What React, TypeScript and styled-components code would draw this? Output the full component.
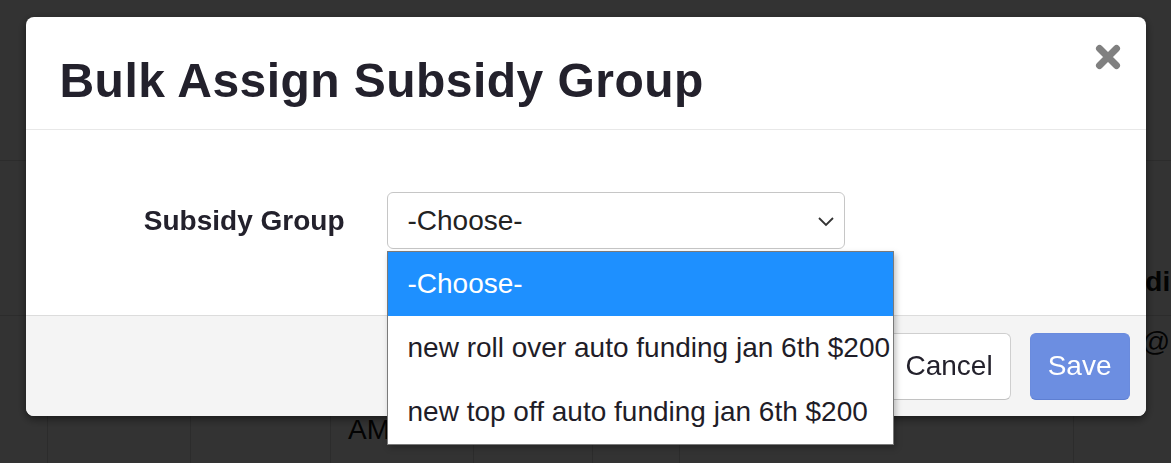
import styled, { createGlobalStyle } from "styled-components";

const GlobalStyle = createGlobalStyle`
  html, body {
    margin: 0;
    padding: 0;
  }
  body {
    font-family: "Liberation Sans", Arial, sans-serif;
    background: #ffffff;
    overflow: hidden;
  }
  * {
    box-sizing: border-box;
  }
`;

const COLS = "47px 143px 140px 143px 119px 87px 394px 1fr";

const Backdrop = styled.div`
  height: 463px;
  background: #ffffff;
  color: #111;
`;

const TopBar = styled.div`
  height: 161px;
  border-bottom: 1px solid #dcdcdc;
`;

const HeadRow = styled.div`
  display: grid;
  grid-template-columns: ${COLS};
  height: 155px;
  border-bottom: 1px solid #dcdcdc;
`;

const HeadCell = styled.div`
  display: flex;
  align-items: flex-end;
  padding: 0 0 17px 21px;
  font-size: 28px;
  line-height: 32px;
  font-weight: 700;
  white-space: nowrap;
  overflow: hidden;
`;

const BodyRow = styled.div`
  display: grid;
  grid-template-columns: ${COLS};
  height: 160px;
`;

const BodyCell = styled.div<{ $pad?: number; $top?: number }>`
  border-left: 1px solid #dcdcdc;
  padding: ${(p) => p.$top ?? 4}px 0 0 ${(p) => p.$pad ?? 17}px;
  font-size: 28px;
  line-height: 44px;
  white-space: nowrap;
  overflow: hidden;
  &:first-child {
    border-left: none;
  }
`;

const Overlay = styled.div`
  position: fixed;
  inset: 0;
  background: rgba(0, 0, 0, 0.8);
  display: flex;
  justify-content: center;
  align-items: flex-start;
  padding-top: 17px;
`;

const Modal = styled.div`
  width: 1120px;
  background: #ffffff;
  border-radius: 8px;
  box-shadow: 0 3px 10px rgba(0, 0, 0, 0.5);
  color: #23212c;
`;

const ModalHeader = styled.header`
  display: flex;
  justify-content: space-between;
  align-items: flex-start;
  padding: 37px 25px 22px 34px;
  border-bottom: 1px solid #e8e8e8;
`;

const Title = styled.h1`
  margin: 0;
  font-size: 48px;
  line-height: 53px;
  font-weight: 700;
  letter-spacing: 0.45px;
  color: #23212c;
`;

const CloseBtn = styled.button`
  border: none;
  background: none;
  padding: 0;
  margin-top: -10px;
  width: 26px;
  height: 26px;
  cursor: pointer;
  display: flex;
`;

const ModalBody = styled.div`
  padding: 62px 0 66px;
`;

const FormRow = styled.div`
  display: grid;
  grid-template-columns: 319px 458px;
  column-gap: 42px;
  align-items: center;
`;

const Label = styled.label`
  text-align: right;
  font-size: 28px;
  line-height: 57px;
  font-weight: 700;
  color: #23212c;
`;

const SelectWrap = styled.div`
  position: relative;
`;

const SelectBox = styled.div`
  height: 57px;
  border: 1px solid #c6c6c6;
  border-radius: 6px;
  display: flex;
  align-items: center;
  justify-content: space-between;
  padding: 0 9px 0 20px;
  font-size: 28px;
  line-height: 32px;
  color: #222;
  background: #fff;
`;

const Menu = styled.ul`
  position: absolute;
  top: calc(100% + 2px);
  left: 0;
  width: 507px;
  margin: 0;
  padding: 0;
  list-style: none;
  background: #ffffff;
  border: 1px solid #7a7a7a;
  box-shadow: 2px 3px 6px rgba(0, 0, 0, 0.25);
  z-index: 2;
`;

const Option = styled.li<{ $active?: boolean }>`
  height: 64px;
  display: flex;
  align-items: center;
  padding-left: 20px;
  font-size: 28px;
  white-space: nowrap;
  background: ${(p) => (p.$active ? "#1e90ff" : "#ffffff")};
  color: ${(p) => (p.$active ? "#ffffff" : "#1f1d28")};
`;

const ModalFooter = styled.footer`
  height: 101px;
  background: #f4f4f4;
  border-top: 1px solid #dcdcdc;
  border-radius: 0 0 8px 8px;
  display: flex;
  justify-content: flex-end;
  align-items: center;
  gap: 19px;
  padding: 0 16px 0 0;
`;

const Button = styled.button<{ $primary?: boolean }>`
  height: 67px;
  padding: 0 17px;
  border-radius: 6px;
  font: inherit;
  font-size: 28px;
  cursor: pointer;
  background: ${(p) => (p.$primary ? "#6c8ee1" : "#ffffff")};
  color: ${(p) => (p.$primary ? "#ffffff" : "#23212c")};
  border: 1px solid ${(p) => (p.$primary ? "#6a8bdd" : "#cfcfcf")};
  border-bottom-color: ${(p) => (p.$primary ? "#5e7fd2" : "#c2c2c2")};
`;

const options = [
  "-Choose-",
  "new roll over auto funding jan 6th $200",
  "new top off auto funding jan 6th $200",
];

export default function App() {
  return (
    <>
      <GlobalStyle />
      <Backdrop>
        <TopBar />
        <HeadRow>
          <HeadCell />
          <HeadCell />
          <HeadCell />
          <HeadCell />
          <HeadCell />
          <HeadCell />
          <HeadCell />
          <HeadCell>Funding</HeadCell>
        </HeadRow>
        <BodyRow>
          <BodyCell />
          <BodyCell />
          <BodyCell />
          <BodyCell $top={92}>AM</BodyCell>
          <BodyCell />
          <BodyCell />
          <BodyCell />
          <BodyCell $pad={21}>ann@rocket.org</BodyCell>
        </BodyRow>
      </Backdrop>

      <Overlay>
        <Modal>
          <ModalHeader>
            <Title>Bulk Assign Subsidy Group</Title>
            <CloseBtn aria-label="Close">
              <svg width="26" height="26" viewBox="0 0 26 26">
                <path
                  d="M4.5 4.5 L21.5 21.5 M21.5 4.5 L4.5 21.5"
                  stroke="#808080"
                  strokeWidth="7"
                  strokeLinecap="round"
                  fill="none"
                />
              </svg>
            </CloseBtn>
          </ModalHeader>

          <ModalBody>
            <FormRow>
              <Label>Subsidy Group</Label>
              <SelectWrap>
                <SelectBox>
                  <span>-Choose-</span>
                  <svg width="18" height="12" viewBox="0 0 18 12">
                    <path
                      d="M2 3 L9 10 L16 3"
                      stroke="#333"
                      strokeWidth="1.8"
                      fill="none"
                    />
                  </svg>
                </SelectBox>
                <Menu>
                  {options.map((o, i) => (
                    <Option key={o} $active={i === 0}>
                      {o}
                    </Option>
                  ))}
                </Menu>
              </SelectWrap>
            </FormRow>
          </ModalBody>

          <ModalFooter>
            <Button>Cancel</Button>
            <Button $primary>Save</Button>
          </ModalFooter>
        </Modal>
      </Overlay>
    </>
  );
}
